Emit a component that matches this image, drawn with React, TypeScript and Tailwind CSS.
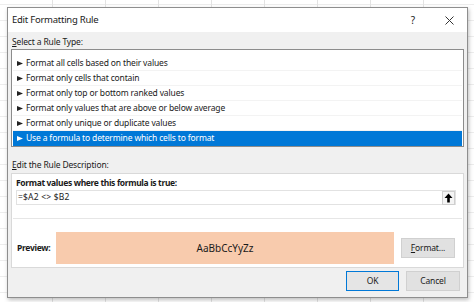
const ruleTypes = [
  'Format all cells based on their values',
  'Format only cells that contain',
  'Format only top or bottom ranked values',
  'Format only values that are above or below average',
  'Format only unique or duplicate values',
  'Use a formula to determine which cells to format',
];

const SELECTED = 5;

const Arrow = ({ active }: { active: boolean }) => (
  <svg width="6" height="5" viewBox="0 0 6 5" className="shrink-0">
    <path d="M0 0 L6 2.5 L0 5 Z" fill={active ? '#ffffff' : '#222222'} />
  </svg>
);

export default function App() {
  return (
    <div
      className="w-[474px] h-[302px] overflow-hidden bg-white pt-[7px] pl-[7px] bg-[linear-gradient(to_right,#e3e3e3_1px,transparent_1px),linear-gradient(to_bottom,#ededed_1px,transparent_1px)] bg-[size:53px_16px,53px_16px] bg-[position:52px_0,0_4px]"
      style={{ fontFamily: '"Noto Sans", "Open Sans", sans-serif' }}
    >
      <div className="w-[461px] h-[291px] flex flex-col border border-[#8e8e8e] bg-[#f0f0f0] shadow-[1px_2px_4px_rgba(0,0,0,0.25)] text-[#1a1a1a]">
        {/* title bar */}
        <div className="h-[24px] shrink-0 bg-white flex items-center pl-[4px]">
          <span className="text-[9.5px] tracking-[-0.25px] flex-1">Edit Formatting Rule</span>
          <span className="text-[10px] w-[10px] text-center mr-[27px]">?</span>
          <svg width="9" height="9" viewBox="0 0 9 9" className="mr-[13px]">
            <path d="M0.5 0.5 L8.5 8.5 M8.5 0.5 L0.5 8.5" stroke="#333" strokeWidth="1" />
          </svg>
        </div>

        <div className="flex flex-col pl-[3px] pr-[3px] text-[8.5px] tracking-[-0.15px]">
          <div className="pl-[1px] h-[17px] pt-[4px] leading-[12px]">
            <span className="underline">S</span>elect a Rule Type:
          </div>

          {/* rule type list */}
          <div className="h-[98px] border border-[#8c8c8c] bg-white pt-[6px] px-[1px]">
            {ruleTypes.map((t, i) => (
              <div
                key={t}
                className={
                  i === SELECTED
                    ? 'h-[15px] flex items-center gap-[3px] pl-[4px] bg-[#0078d7] text-white'
                    : 'h-[15px] flex items-center gap-[3px] pl-[4px] border-b border-[#f3f3f3]'
                }
              >
                <Arrow active={i === SELECTED} />
                <span>{t}</span>
              </div>
            ))}
          </div>

          <div className="pl-[1px] h-[26px] pt-[12px] leading-[12px]">
            <span className="underline">E</span>dit the Rule Description:
          </div>

          {/* description box */}
          <div className="h-[95px] border border-[#d9d9d9] bg-white flex flex-col px-[4px]">
            <div className="font-bold tracking-[-0.35px] h-[16px] pt-[3px] leading-[12px]">
              Format values where this formula is true:
            </div>
            <div className="h-[15px] mr-[3px] border border-[#e2e2e2] flex items-center">
              <span className="pl-[1px] flex-1 tracking-[0.2px]">=$A2 &lt;&gt; $B2</span>
              <div className="w-[13px] h-[14px] border border-[#cfcfcf] bg-[#f4f4f4] flex items-center justify-center">
                <svg width="9" height="10" viewBox="0 0 9 10">
                  <path d="M4.5 0.5 L8.5 5 L5.8 5 L5.8 9.5 L3.2 9.5 L3.2 5 L0.5 5 Z" fill="#000" />
                </svg>
              </div>
            </div>
            <div className="h-[14px] shrink-0 border-b border-[#e6e6e6] -mx-[3px]" />
            <div className="flex items-center pt-[13px] h-[45px]">
              <span className="font-bold tracking-[-0.3px] w-[40px] pl-[1px]">Preview:</span>
              <div className="w-[338px] h-[32px] bg-[#f8cbad] flex items-center justify-center text-[10px] tracking-normal">
                AaBbCcYyZz
              </div>
              <div className="ml-[7px] w-[54px] h-[20px] bg-[#e1e1e1] border border-[#d0d0d0] flex items-center justify-center">
                <span>
                  <span className="underline">F</span>ormat...
                </span>
              </div>
            </div>
          </div>

          {/* buttons */}
          <div className="flex justify-end gap-[7px] pt-[3px] pr-[4px]">
            <div className="w-[53px] h-[20px] bg-[#e5e5e5] border border-[#0078d7] flex items-center justify-center">
              OK
            </div>
            <div className="w-[54px] h-[20px] bg-[#e1e1e1] border border-[#d0d0d0] flex items-center justify-center">
              Cancel
            </div>
          </div>
        </div>
      </div>
    </div>
  );
}
